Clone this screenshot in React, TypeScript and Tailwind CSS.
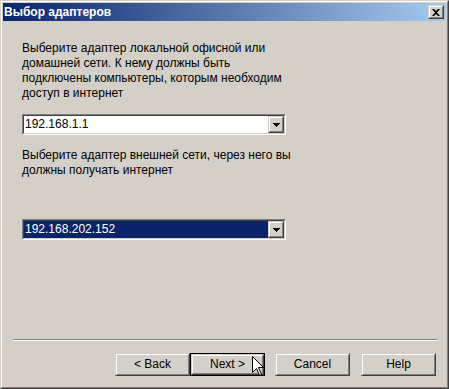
import React from "react";

const F = { fontFamily: '"Liberation Sans", Arial, sans-serif' };

function Raised({ className = "", children }: { className?: string; children?: React.ReactNode }) {
  return (
    <div className={`border border-t-[#d4d0c8] border-l-[#d4d0c8] border-r-[#404040] border-b-[#404040] ${className}`}>
      <div className="h-full w-full border border-t-white border-l-white border-r-[#808080] border-b-[#808080] bg-[#d4d0c8] flex items-center justify-center">
        {children}
      </div>
    </div>
  );
}

function Combo({ value, selected }: { value: string; selected?: boolean }) {
  return (
    <div className="w-[264px] h-[21px] border border-t-[#808080] border-l-[#808080] border-r-white border-b-white">
      <div className="h-full w-full border border-t-[#404040] border-l-[#404040] border-r-[#d4d0c8] border-b-[#d4d0c8] bg-white flex">
        <div className={`flex-1 flex items-center pl-[1px] ${selected ? "bg-[#0a246a] text-white" : "text-black"}`}>
          <span className="text-[12px] leading-[15px]" style={F}>{value}</span>
        </div>
        <Raised className="w-[16px] h-[17px]">
          <svg width="7" height="4" viewBox="0 0 7 4">
            <path d="M0 0h7v1H0zM1 1h5v1H1zM2 2h3v1H2zM3 3h1v1H3z" fill="#000" />
          </svg>
        </Raised>
      </div>
    </div>
  );
}

function Btn({ label, def }: { label: string; def?: boolean }) {
  return (
    <div className={`w-[75px] h-[23px] ${def ? "border border-black" : ""}`}>
      <Raised className="w-full h-full">
        <span className="text-[12px] leading-[15px] text-black" style={F}>{label}</span>
      </Raised>
    </div>
  );
}

export default function App() {
  return (
    <div className="w-[449px] h-[389px] relative overflow-hidden bg-[#d4d0c8]">
      <div className="w-full h-full border border-t-[#d4d0c8] border-l-[#d4d0c8] border-r-[#404040] border-b-[#404040]">
        <div className="w-full h-full border border-t-white border-l-white border-r-[#808080] border-b-[#808080] p-[1px] flex flex-col">
          <div className="h-[18px] flex items-center justify-between pl-[1px] pr-[2px] bg-[linear-gradient(to_right,#0a246a,#a6caf0)]">
            <span className="text-white font-bold text-[12px] leading-[14px]" style={F}>Выбор адаптеров</span>
            <Raised className="w-[16px] h-[14px]">
              <svg width="8" height="7" viewBox="0 0 8 7">
                <path d="M0 0h2l2 2 2-2h2L5 3.5 8 7H6L4 5 2 7H0l3-3.5z" fill="#000" />
              </svg>
            </Raised>
          </div>
          <div className="flex-1 flex flex-col pt-[20px] pl-[19px] text-black" style={F}>
            <p className="text-[12px] leading-[15px] whitespace-nowrap">
              Выберите адаптер локальной офисной или
              <br />
              домашней сети. К нему должны быть
              <br />
              подключены компьютеры, которым необходим
              <br />
              доступ в интернет
            </p>
            <div className="mt-[13px]">
              <Combo value="192.168.1.1" />
            </div>
            <p className="text-[12px] leading-[15px] mt-[13px] whitespace-nowrap">
              Выберите адаптер внешней сети, через него вы
              <br />
              должны получать интернет
            </p>
            <div className="mt-[41px]">
              <Combo value="192.168.202.152" selected />
            </div>
          </div>
          <div className="ml-[10px] mr-[9px] h-[2px] border-t border-t-[#808080] border-b border-b-white" />
          <div className="h-[45px] pt-[12px] flex items-start pl-[112px]">
            <Btn label="< Back" />
            <Btn label="Next >" def />
            <div className="w-[10px]" />
            <Btn label="Cancel" />
            <div className="w-[11px]" />
            <Btn label="Help" />
          </div>
        </div>
      </div>
      <svg className="absolute left-[252px] top-[356px]" width="12" height="21" viewBox="0 0 12 21">
        <path d="M0.5 0.5 V16.5 L4.5 12.5 L7.5 19.5 L9.5 18.5 L6.5 11.5 H11.5 Z" fill="#fff" stroke="#000" strokeWidth="1" />
      </svg>
    </div>
  );
}
